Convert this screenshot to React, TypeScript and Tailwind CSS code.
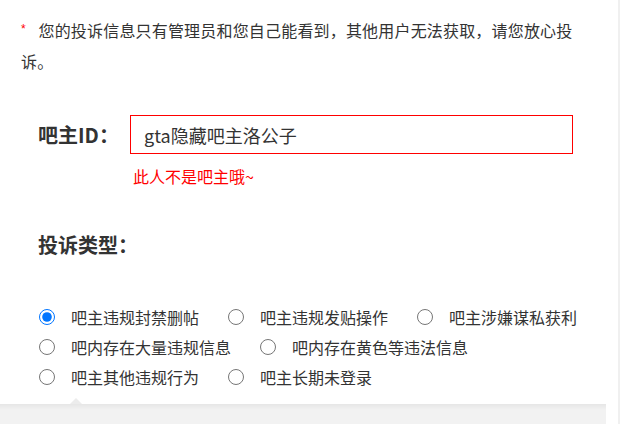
const OPTIONS: string[][] = [
  ["吧主违规封禁删帖", "吧主违规发贴操作", "吧主涉嫌谋私获利"],
  ["吧内存在大量违规信息", "吧内存在黄色等违法信息"],
  ["吧主其他违规行为", "吧主长期未登录"],
];

const RadioItem = ({ label, checked }: { label: string; checked?: boolean }) => (
  <label className="flex items-center h-[30px]">
    <input
      type="radio"
      name="complaintType"
      defaultChecked={checked}
      className="m-0 w-4 h-4 shrink-0"
    />
    <span className="ml-4 text-[16px] leading-[30px] text-[#333] whitespace-nowrap">
      {label}
    </span>
  </label>
);

export default function App() {
  return (
    <div
      className="w-[620px] h-[424px] bg-white border-r-2 border-[#f0f0f0] overflow-hidden flex flex-col"
      style={{ fontFamily: '"Noto Sans CJK SC", "Noto Sans", sans-serif' }}
    >
      <p className="ml-[21px] mt-[15px] w-[560px] text-[16px] leading-[31px] tracking-[0.18px] text-[#333]">
        <span
          className="inline-block w-[17.5px] align-top text-[12px] leading-[29px] text-[#ff0000]"
          style={{ fontFamily: '"Liberation Sans", sans-serif' }}
        >
          *
        </span>
        您的投诉信息只有管理员和您自己能看到，其他用户无法获取，请您放心投诉。
      </p>

      <div className="mt-[38px] pl-[38px] flex items-center">
        <span className="w-[92px] text-[20px] font-bold leading-[28px] text-[#333]">
          吧主ID：
        </span>
        <input
          type="text"
          defaultValue="gta隐藏吧主洛公子"
          className="w-[443px] h-[39px] border border-[#ff0000] pl-[13px] text-[18px] text-[#333] outline-none"
        />
      </div>

      <div className="mt-[11px] pl-[133px] text-[16px] leading-[22px] text-[#ff0000]">
        此人不是吧主哦~
      </div>

      <h3 className="mt-[44px] pl-[38px] text-[20px] font-bold leading-[28px] text-[#333]">
        投诉类型：
      </h3>

      <div className="mt-[43px] pl-[39px] flex flex-col">
        {OPTIONS.map((row, r) => (
          <div key={r} className="flex gap-x-[29px]">
            {row.map((label, i) => (
              <RadioItem key={label} label={label} checked={r === 0 && i === 0} />
            ))}
          </div>
        ))}
      </div>

      <div className="relative mt-[12px] w-[606px] h-[20px] bg-[linear-gradient(#e6e6e6,#f2f2f2_6px)]">
        <div className="absolute left-[70px] -top-[6px] w-0 h-0 border-x-[6px] border-x-transparent border-b-[6px] border-b-[#ececec]" />
      </div>
    </div>
  );
}
